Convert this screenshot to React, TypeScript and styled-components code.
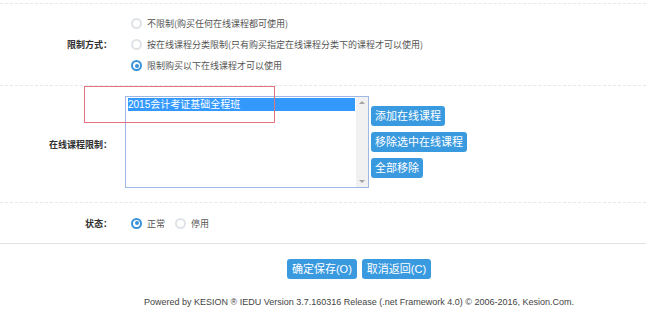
import React from "react";
import styled, { createGlobalStyle, css } from "styled-components";

const GlobalStyle = createGlobalStyle`
  html, body { margin: 0; padding: 0; background: #fff; }
  body { font-family: "Noto Sans CJK SC", "Noto Sans", sans-serif; color: #333; }
  * { box-sizing: border-box; }
`;

const Page = styled.div`
  width: 646px;
  padding-top: 3px;
`;

const Row = styled.div<{ $first?: boolean; $solid?: boolean; $height?: number }>`
  position: relative;
  display: grid;
  grid-template-columns: 112px 1fr;
  column-gap: 13px;
  align-items: center;
  border-bottom: 1px ${(p) => (p.$solid ? "solid #e2e2e2" : "dashed #e8e8e8")};
  ${(p) => p.$first && css`border-top: 1px dashed #e8e8e8;`}
  ${(p) => p.$height && css`height: ${p.$height}px;`}
`;

const Label = styled.div`
  justify-self: end;
  font-size: 9px;
  font-weight: bold;
  color: #2f2f2f;
  white-space: nowrap;
`;

const Cell = styled.div<{ $pt?: number; $pb?: number }>`
  padding-top: ${(p) => p.$pt ?? 0}px;
  padding-bottom: ${(p) => p.$pb ?? 0}px;
  display: flex;
  align-items: center;
`;

const RadioList = styled.div<{ $inline?: boolean }>`
  display: flex;
  flex-direction: ${(p) => (p.$inline ? "row" : "column")};
  margin-left: 6px;
  gap: ${(p) => (p.$inline ? "10px" : "0")};
`;

const RadioItem = styled.label`
  display: flex;
  align-items: center;
  height: 21px;
  gap: 5px;
  font-size: 9px;
  color: #555;
  white-space: nowrap;
`;

const RadioDot = styled.span<{ $checked?: boolean }>`
  position: relative;
  width: 11px;
  height: 11px;
  border-radius: 50%;
  flex: none;
  background: #fff;
  border: 2px solid ${(p) => (p.$checked ? "#3a93d9" : "#dfe3e8")};
  ${(p) =>
    p.$checked &&
    css`
      &::after {
        content: "";
        position: absolute;
        left: 1.5px;
        top: 1.5px;
        width: 4px;
        height: 4px;
        border-radius: 50%;
        background: #3a93d9;
      }
    `}
`;

const Annotation = styled.div`
  position: absolute;
  left: 84px;
  top: 0;
  width: 191px;
  height: 37px;
  border: 1px solid #e27480;
  pointer-events: none;
`;

const PickerWrap = styled.div`
  display: flex;
  align-items: center;
  gap: 2px;
`;

const ListBox = styled.div`
  width: 244px;
  height: 92px;
  border-width: 1px;
  border-style: solid;
  border-color: #9db9e3;
  display: flex;
  background: #fff;
`;

const Options = styled.div`
  flex: 1;
  padding: 1px 1px 1px 2px;
`;

const Option = styled.div<{ $selected?: boolean }>`
  height: 13px;
  line-height: 13px;
  font-family: "Liberation Sans", "Noto Sans CJK SC", sans-serif;
  font-size: 10px;
  white-space: nowrap;
  color: ${(p) => (p.$selected ? "#fff" : "#222")};
  background: ${(p) => (p.$selected ? "#3399ff" : "transparent")};
`;

const ScrollTrack = styled.div`
  width: 12px;
  background: #f1f1f1;
  display: flex;
  flex-direction: column;
  justify-content: space-between;
  align-items: center;
  padding: 4px 0;
`;

const Arrow = styled.span<{ $down?: boolean }>`
  width: 0;
  height: 0;
  border-left: 3px solid transparent;
  border-right: 3px solid transparent;
  ${(p) =>
    p.$down
      ? css`border-top: 3px solid #a3a3a3;`
      : css`border-bottom: 3px solid #a3a3a3;`}
`;

const SideButtons = styled.div`
  display: flex;
  flex-direction: column;
  align-items: flex-start;
  gap: 6px;
`;

const Button = styled.button`
  height: 20px;
  padding: 0 4px;
  border: none;
  border-radius: 3px;
  background: #3a9ae0;
  color: #fff;
  font-family: "Liberation Sans", "Noto Sans CJK SC", sans-serif;
  font-size: 11px;
  line-height: 20px;
  white-space: nowrap;
  cursor: pointer;
`;

const ActionButton = styled(Button)`
  padding: 0 5px;
`;

const Actions = styled.div`
  display: flex;
  justify-content: center;
  gap: 5px;
  padding: 15px 0 0 72px;
  margin-bottom: 16px;
`;

const Footer = styled.div`
  padding-left: 72px;
  text-align: center;
  font-family: "Liberation Sans", Arial, sans-serif;
  font-size: 9px;
  line-height: 14px;
  color: #444;
  white-space: nowrap;
`;

export default function App() {
  return (
    <>
      <GlobalStyle />
      <Page>
        <Row $first>
          <Label>限制方式：</Label>
          <Cell $pt={9} $pb={9}>
            <RadioList>
              <RadioItem>
                <RadioDot />
                不限制(购买任何在线课程都可使用)
              </RadioItem>
              <RadioItem>
                <RadioDot />
                按在线课程分类限制(只有购买指定在线课程分类下的课程才可以使用)
              </RadioItem>
              <RadioItem>
                <RadioDot $checked />
                限制购买以下在线课程才可以使用
              </RadioItem>
            </RadioList>
          </Cell>
        </Row>
        <Row>
          <Annotation />
          <Label>在线课程限制：</Label>
          <Cell $pt={10} $pb={14}>
            <PickerWrap>
              <ListBox>
                <Options>
                  <Option $selected>2015会计考证基础全程班</Option>
                </Options>
                <ScrollTrack>
                  <Arrow />
                  <Arrow $down />
                </ScrollTrack>
              </ListBox>
              <SideButtons>
                <Button>添加在线课程</Button>
                <Button>移除选中在线课程</Button>
                <Button>全部移除</Button>
              </SideButtons>
            </PickerWrap>
          </Cell>
        </Row>
        <Row $solid $height={41}>
          <Label>状态：</Label>
          <Cell>
            <RadioList $inline>
              <RadioItem>
                <RadioDot $checked />
                正常
              </RadioItem>
              <RadioItem>
                <RadioDot />
                停用
              </RadioItem>
            </RadioList>
          </Cell>
        </Row>
        <Actions>
          <ActionButton>确定保存(O)</ActionButton>
          <ActionButton>取消返回(C)</ActionButton>
        </Actions>
        <Footer>
          Powered by KESION ® IEDU Version 3.7.160316 Release (.net Framework 4.0) © 2006-2016, Kesion.Com.
        </Footer>
      </Page>
    </>
  );
}
